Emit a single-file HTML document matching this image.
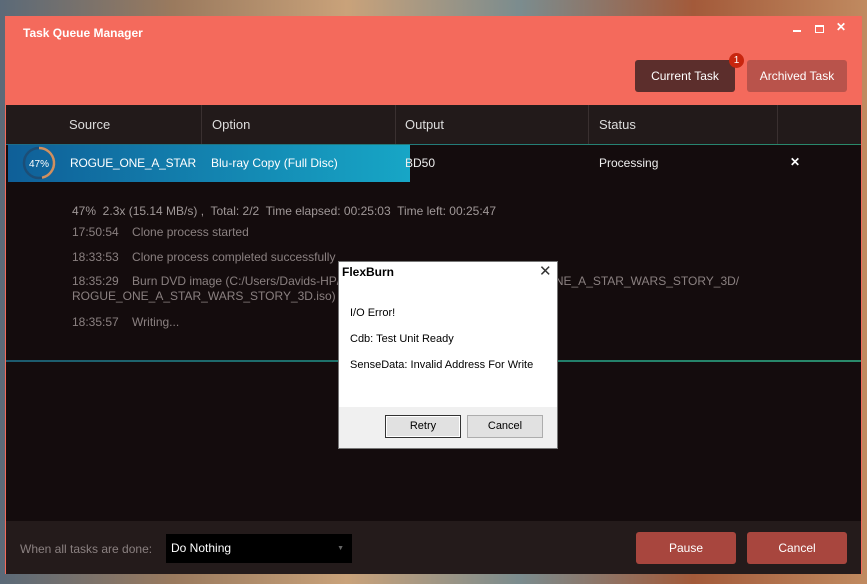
<!DOCTYPE html>
<html><head><meta charset="utf-8"><style>
*{margin:0;padding:0;box-sizing:border-box}
body{width:867px;height:584px;overflow:hidden;position:relative;font-family:"Liberation Sans",sans-serif;
background:linear-gradient(90deg,#5b6a78 0%,#9a7a5e 20%,#c9a27a 40%,#7b8c8e 60%,#a35a3a 80%,#c08a60 100%)}
.abs{position:absolute}
#win{left:5px;top:16px;width:857px;height:558px;background:#140c0d;border:1px solid #f26a5b;border-top:none}
#hdr{left:0;top:0;width:855px;height:89px;background:#f46a5c}
.t{color:#fff;font-size:12px;font-weight:bold;left:17px;top:10px}
.btn{font-size:12px;color:#fff;text-align:center;line-height:32px;border-radius:3px}
#th{left:0;top:89px;width:855px;height:39px;background:#221a1a;color:#ddd;font-size:13px}
#th div{position:absolute;top:0;height:39px;line-height:39px;border-right:1px solid #3a3030}
.log{color:#8a8080;font-size:12px;white-space:nowrap}
#ft{left:0;top:505px;width:855px;height:53px;background:#241b1b}
</style></head><body>
<div id="win" class="abs">
 <div id="hdr" class="abs">
  <div class="abs t">Task Queue Manager</div>
  <div class="abs" style="left:787px;top:14px;width:8px;height:2px;background:#fff"></div>
  <div class="abs" style="left:809px;top:9px;width:9px;height:8px;border:1.5px solid #fff;border-top-width:2.5px"></div>
  <div class="abs" style="left:830px;top:4px;color:#fff;font-size:12px;font-weight:bold">✕</div>
  <div class="abs btn" style="left:629px;top:44px;width:100px;height:32px;background:#5c2e2c">Current Task</div>
  <div class="abs" style="left:723px;top:37px;width:15px;height:15px;border-radius:50%;background:#c8260f;color:#fff;font-size:10px;text-align:center;line-height:15px">1</div>
  <div class="abs btn" style="left:741px;top:44px;width:100px;height:32px;background:#b9534b">Archived Task</div>
 </div>
 <div id="th" class="abs">
  <div style="left:0;width:196px;padding-left:63px">Source</div>
  <div style="left:196px;width:194px;padding-left:10px">Option</div>
  <div style="left:390px;width:193px;padding-left:9px">Output</div>
  <div style="left:583px;width:189px;padding-left:10px">Status</div>
 </div>
 <div class="abs" style="left:0;top:128px;width:855px;height:1px;background:linear-gradient(90deg,#1d6d8a,#2a8a6a)"></div>
 <div class="abs" style="left:2px;top:129px;width:402px;height:37px;background:linear-gradient(90deg,#0f5f98,#17a6c6)"></div>
 <svg class="abs" style="left:15px;top:130px" width="36" height="36"><circle cx="18" cy="17" r="15" fill="none" stroke="#1c4e77" stroke-width="2.5"/><path d="M18 2 A15 15 0 0 1 21 31.7" fill="none" stroke="#d09060" stroke-width="2.5"/><text x="18" y="21" fill="#fff" font-size="10" text-anchor="middle" font-family="Liberation Sans">47%</text></svg>
 <div class="abs" style="left:64px;top:140px;color:#fff;font-size:12px;letter-spacing:-0.2px">ROGUE_ONE_A_STAR</div>
 <div class="abs" style="left:205px;top:140px;color:#fff;font-size:12px">Blu-ray Copy (Full Disc)</div>
 <div class="abs" style="left:399px;top:140px;color:#eee;font-size:12px">BD50</div>
 <div class="abs" style="left:593px;top:140px;color:#eee;font-size:12px">Processing</div>
 <div class="abs" style="left:784px;top:139px;color:#fff;font-size:12px;font-weight:bold">✕</div>
 <div class="abs log" style="left:66px;top:188px;color:#a09898">47%&nbsp; 2.3x (15.14 MB/s) ,&nbsp; Total: 2/2&nbsp; Time elapsed: 00:25:03&nbsp; Time left: 00:25:47</div>
 <div class="abs log" style="left:66px;top:209px">17:50:54&nbsp;&nbsp;&nbsp; Clone process started</div>
 <div class="abs log" style="left:66px;top:234px">18:33:53&nbsp;&nbsp;&nbsp; Clone process completed successfully</div>
 <div class="abs log" style="left:66px;top:258px;line-height:15px">18:35:29&nbsp;&nbsp;&nbsp; Burn DVD image (C:/Users/Davids-HP/Documents/FlexBurn/Output/ROGUE_ONE_A_STAR_WARS_STORY_3D/<br>ROGUE_ONE_A_STAR_WARS_STORY_3D.iso)</div>
 <div class="abs log" style="left:66px;top:299px">18:35:57&nbsp;&nbsp;&nbsp; Writing...</div>
 <div class="abs" style="left:0;top:344px;width:855px;height:2px;background:linear-gradient(90deg,#1d5a6e,#1f7a6a,#2a8a6a)"></div>
 <div id="ft" class="abs">
  <div class="abs" style="left:14px;top:21px;color:#8a8080;font-size:12px">When all tasks are done:</div>
  <div class="abs" style="left:160px;top:13px;width:186px;height:29px;background:#000;color:#fff;font-size:12px;line-height:29px;padding-left:5px">Do Nothing<span style="position:absolute;right:8px;color:#666;font-size:7px">▼</span></div>
  <div class="abs btn" style="left:630px;top:11px;width:100px;height:32px;background:#a8463e">Pause</div>
  <div class="abs btn" style="left:741px;top:11px;width:100px;height:32px;background:#a8463e">Cancel</div>
 </div>
</div>
<div class="abs" style="left:338px;top:261px;width:220px;height:188px;background:#fff;border:1px solid #777;font-size:11px;color:#000">
 <div class="abs" style="left:3px;top:3px;font-weight:bold;font-size:12px">FlexBurn</div>
 <div class="abs" style="left:200px;top:0px;font-size:15px;color:#333">✕</div>
 <div class="abs" style="left:11px;top:45px">I/O Error!</div>
 <div class="abs" style="left:11px;top:71px">Cdb: Test Unit Ready</div>
 <div class="abs" style="left:11px;top:97px">SenseData: Invalid Address For Write</div>
 <div class="abs" style="left:0;top:145px;width:218px;height:41px;background:#f0f0f0"></div>
 <div class="abs" style="left:46px;top:153px;width:76px;height:23px;background:#e1e1e1;border:1px solid #333;box-shadow:inset 0 0 0 1px #fff;text-align:center;line-height:21px">Retry</div>
 <div class="abs" style="left:128px;top:153px;width:76px;height:23px;background:#e1e1e1;border:1px solid #adadad;text-align:center;line-height:21px">Cancel</div>
</div>
</body></html>
